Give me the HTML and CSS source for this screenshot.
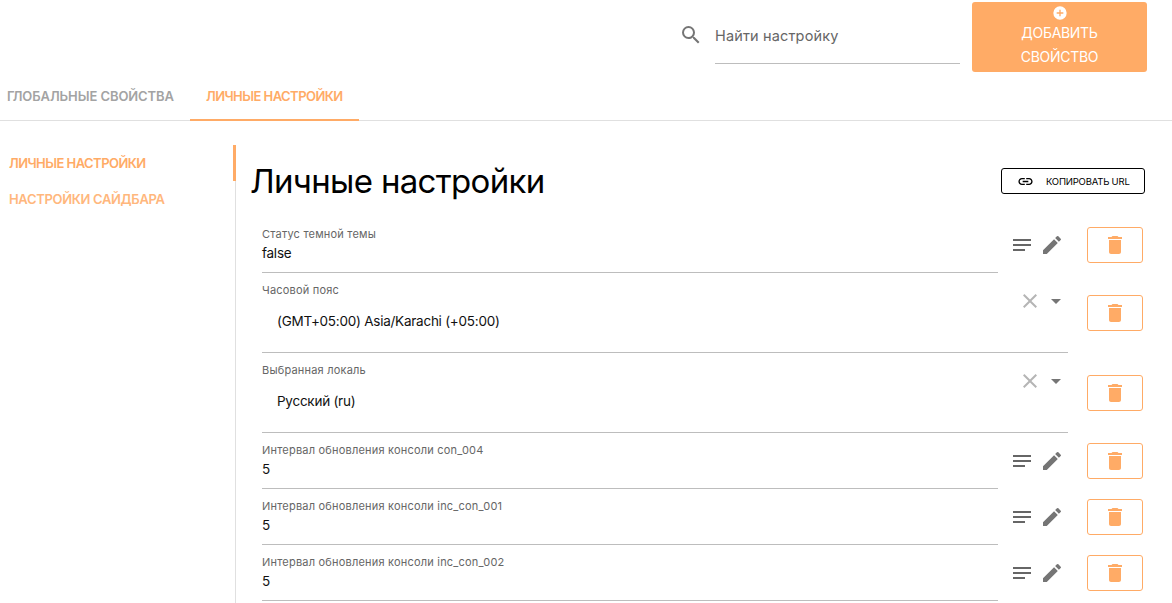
FILE: index.html
```html
<!DOCTYPE html>
<html lang="ru">
<head>
<meta charset="utf-8">
<title>Настройки</title>
<link rel="stylesheet" href="styles.css">
</head>
<body>
<svg class="defs" width="0" height="0" aria-hidden="true">
  <symbol id="i-notes" viewBox="0 0 24 24"><path d="M3 18h12v-2H3v2zM3 6v2h18V6H3zm0 7h18v-2H3v2z"/></symbol>
  <symbol id="i-edit" viewBox="0 0 24 24"><path d="M3 17.25V21h3.75L17.81 9.94l-3.75-3.75L3 17.25zM20.71 7.04a1 1 0 0 0 0-1.41l-2.34-2.34a1 1 0 0 0-1.41 0l-1.83 1.83 3.75 3.75 1.83-1.83z"/></symbol>
  <symbol id="i-trash" viewBox="0 0 24 24"><path d="M6 19c0 1.1.9 2 2 2h8c1.100 0 2-.9 2-2V7H6v12zM19 4h-3.500l-1-1h-5l-1 1H5v2h14V4z"/></symbol>
  <symbol id="i-close" viewBox="0 0 24 24"><path d="M19 6.410 17.590 5 12 10.590 6.410 5 5 6.410 10.590 12 5 17.590 6.410 19 12 13.410 17.590 19 19 17.590 13.410 12z"/></symbol>
</svg>

<header class="topbar">
  <div class="search">
    <svg class="search-icon" viewBox="0 0 24 24"><path d="M15.500 14h-.79l-.28-.27A6.470 6.470 0 0 0 16 9.500 6.500 6.500 0 1 0 9.500 16c1.610 0 3.090-.59 4.230-1.570l.27.28v.79l5 4.990L20.490 19l-4.990-5zm-6 0C7.010 14 5 11.990 5 9.500S7.010 5 9.500 5 14 7.010 14 9.500 11.990 14 9.500 14z"/></svg>
    <div class="search-field">Найти настройку</div>
  </div>
  <button class="add-btn">
    <svg class="add-icon" viewBox="0 0 24 24"><path d="M12 2a10 10 0 1 0 0 20 10 10 0 0 0 0-20zm5 11h-4v4h-2v-4H7v-2h4V7h2v4h4v2z"/></svg>
    <span>ДОБАВИТЬ<br>СВОЙСТВО</span>
  </button>
</header>

<nav class="tabs">
  <a class="tab tab-global">ГЛОБАЛЬНЫЕ СВОЙСТВА</a>
  <a class="tab tab-active">ЛИЧНЫЕ НАСТРОЙКИ</a>
</nav>

<div class="layout">
  <aside class="side">
    <a class="side-link side-link-active">ЛИЧНЫЕ НАСТРОЙКИ</a>
    <a class="side-link side-link-sidebar">НАСТРОЙКИ САЙДБАРА</a>
  </aside>
  <main class="content">
    <div class="title-row">
      <h1 class="title">Личные настройки</h1>
      <button class="copy-btn">
        <svg class="copy-icon" viewBox="0 0 24 24"><path d="M3.900 12c0-1.710 1.390-3.100 3.100-3.100h4V7H7c-2.760 0-5 2.240-5 5s2.240 5 5 5h4v-1.900H7c-1.710 0-3.100-1.390-3.100-3.100zM8 13h8v-2H8v2zm9-6h-4v1.900h4c1.710 0 3.100 1.390 3.100 3.100s-1.390 3.100-3.100 3.100h-4V17h4c2.760 0 5-2.240 5-5s-2.240-5-5-5z"/></svg>
        <span>КОПИРОВАТЬ URL</span>
      </button>
    </div>

    <div class="row">
      <div class="field"><div class="label">Статус темной темы</div><div class="value">false</div></div>
      <div class="tools"><svg class="tool tool-notes"><use href="#i-notes"/></svg><svg class="tool"><use href="#i-edit"/></svg></div>
      <button class="del"><svg class="del-icon"><use href="#i-trash"/></svg></button>
    </div>

    <div class="row row-select">
      <div class="field field-select">
        <div class="label">Часовой пояс</div>
        <div class="value value-select">(GMT+05:00) Asia/Karachi (+05:00)</div>
        <div class="select-tools"><svg class="clear"><use href="#i-close"/></svg><span class="caret"></span></div>
      </div>
      <button class="del"><svg class="del-icon"><use href="#i-trash"/></svg></button>
    </div>

    <div class="row row-select">
      <div class="field field-select">
        <div class="label">Выбранная локаль</div>
        <div class="value value-select">Русский (ru)</div>
        <div class="select-tools"><svg class="clear"><use href="#i-close"/></svg><span class="caret"></span></div>
      </div>
      <button class="del"><svg class="del-icon"><use href="#i-trash"/></svg></button>
    </div>

    <div class="row">
      <div class="field"><div class="label">Интервал обновления консоли con_004</div><div class="value">5</div></div>
      <div class="tools"><svg class="tool tool-notes"><use href="#i-notes"/></svg><svg class="tool"><use href="#i-edit"/></svg></div>
      <button class="del"><svg class="del-icon"><use href="#i-trash"/></svg></button>
    </div>

    <div class="row">
      <div class="field"><div class="label">Интервал обновления консоли inc_con_001</div><div class="value">5</div></div>
      <div class="tools"><svg class="tool tool-notes"><use href="#i-notes"/></svg><svg class="tool"><use href="#i-edit"/></svg></div>
      <button class="del"><svg class="del-icon"><use href="#i-trash"/></svg></button>
    </div>

    <div class="row">
      <div class="field"><div class="label">Интервал обновления консоли inc_con_002</div><div class="value">5</div></div>
      <div class="tools"><svg class="tool tool-notes"><use href="#i-notes"/></svg><svg class="tool"><use href="#i-edit"/></svg></div>
      <button class="del"><svg class="del-icon"><use href="#i-trash"/></svg></button>
    </div>
  </main>
</div>
</body>
</html>
```

FILE: styles.css
```css
* { box-sizing: border-box; }
html, body { height: 603px; overflow: hidden; }
body {
  margin: 0;
  background: #fff;
  color: #000;
  font-family: "Inter", "Noto Sans", sans-serif;
  display: flex;
  flex-direction: column;
}
.defs { display: block; height: 0; }

.topbar {
  display: flex;
  justify-content: flex-end;
  align-items: flex-start;
  height: 72px;
  padding: 2px 25px 0 0;
  flex: none;
}
.search { display: flex; align-items: flex-start; margin-right: 12px; }
.search-icon { width: 24px; height: 24px; fill: #757575; margin: 21px 12px 0 0; display: block; }
.search-field {
  width: 245px;
  height: 62px;
  padding-top: 24px;
  font-size: 14.500px;
  letter-spacing: 0.15px;
  line-height: 20px;
  color: #666;
  border-bottom: 1px solid #bdbdbd;
}
.add-btn {
  width: 175px;
  height: 70px;
  padding: 3px 0 0;
  border: 0;
  border-radius: 3px;
  background: #ffab66;
  color: #fff;
  font: inherit;
  font-size: 14px;
  line-height: 24px;
  display: flex;
  flex-direction: column;
  align-items: center;
  justify-content: flex-start;
}
.add-btn span { letter-spacing: -0.3px; }
.add-icon { width: 16px; height: 16px; fill: #fff; display: block; flex: none; }

.tabs {
  display: flex;
  height: 49px;
  flex: none;
  border-bottom: 1px solid #e0e0e0;
}
.tab {
  display: block;
  height: 48px;
  padding: 15px 16px 0;
  font-size: 13px;
  line-height: 18px;
  font-weight: 600;
  letter-spacing: -0.55px;
  white-space: nowrap;
  color: #a3a3a3;
}
.tab-global { padding: 15px 16px 0 7px; width: 190px; letter-spacing: -0.08px; }
.tab-active {
  width: 169px;
  height: 49px;
  color: #ffab66;
  border-bottom: 2px solid #ffab66;
}

.layout { display: flex; flex: 1; min-height: 0; padding-top: 24px; }
.side {
  position: relative;
  width: 236px;
  flex: none;
  border-right: 1px solid #e0e0e0;
}
.side::after {
  content: "";
  position: absolute;
  top: 0;
  right: -1px;
  width: 3px;
  height: 36px;
  background: #ffab66;
}
.side-link {
  display: block;
  height: 36px;
  padding: 9px 0 0 9px;
  font-size: 13px;
  line-height: 18px;
  font-weight: 600;
  letter-spacing: -0.55px;
  white-space: nowrap;
  color: #ffb77d;
}
.side-link-active { color: #ffab66; }
.side-link-sidebar { letter-spacing: -0.33px; }

.content { flex: 1; min-width: 0; padding-left: 15px; }
.title-row {
  display: flex;
  justify-content: space-between;
  align-items: center;
  height: 72px;
  padding-right: 27px;
}
.title {
  margin: 0 0 0 -1px;
  font-size: 33px;
  line-height: 40px;
  font-weight: 400;
  letter-spacing: -0.67px;
}
.copy-btn {
  display: flex;
  align-items: center;
  width: 144px;
  height: 26px;
  padding: 0 0 0 15px;
  background: #fff;
  color: #000;
  border: 1px solid #000;
  border-radius: 3px;
  font: inherit;
  font-size: 9.500px;
  letter-spacing: -0.2px;
}
.copy-icon { width: 17px; height: 17px; fill: #000; margin-right: 12px; flex: none; }

.row {
  display: flex;
  align-items: flex-start;
  height: 56px;
  padding-left: 11px;
}
.row-select { height: 80px; }
.field {
  width: 736px;
  height: 56px;
  padding-top: 10px;
  border-bottom: 1px solid #bdbdbd;
  flex: none;
}
.field-select {
  position: relative;
  width: 806px;
  height: 80px;
}
.label { font-size: 11px; letter-spacing: 0.2px; line-height: 14px; color: #666; }
.value { margin-top: 3px; font-size: 13.500px; letter-spacing: -0.25px; line-height: 19px; color: #111; }
.value-select { margin-top: 15px; padding-left: 15px; }
.tools { display: flex; width: 70px; padding: 16px 0 0 12px; flex: none; }
.tool { width: 24px; height: 24px; fill: #757575; display: block; flex: none; }
.tool-notes { margin-right: 6px; fill: #666; }
.select-tools {
  position: absolute;
  top: 16px;
  right: 0;
  display: flex;
  align-items: center;
}
.clear { width: 24px; height: 24px; fill: #b5b5b5; display: block; margin-right: 1px; }
.caret {
  display: block;
  width: 0;
  height: 0;
  margin: 0 7px 0 8px;
  border-left: 5px solid transparent;
  border-right: 5px solid transparent;
  border-top: 5px solid #757575;
}
.del {
  width: 56px;
  height: 36px;
  margin: 10px 0 0 19px;
  padding: 0;
  background: #fff;
  border: 1px solid #ffab66;
  border-radius: 3px;
  display: flex;
  align-items: center;
  justify-content: center;
  flex: none;
}
.row-select .del { margin-top: 22px; }
.del-icon { width: 24px; height: 24px; fill: #ffab66; display: block; }
```
